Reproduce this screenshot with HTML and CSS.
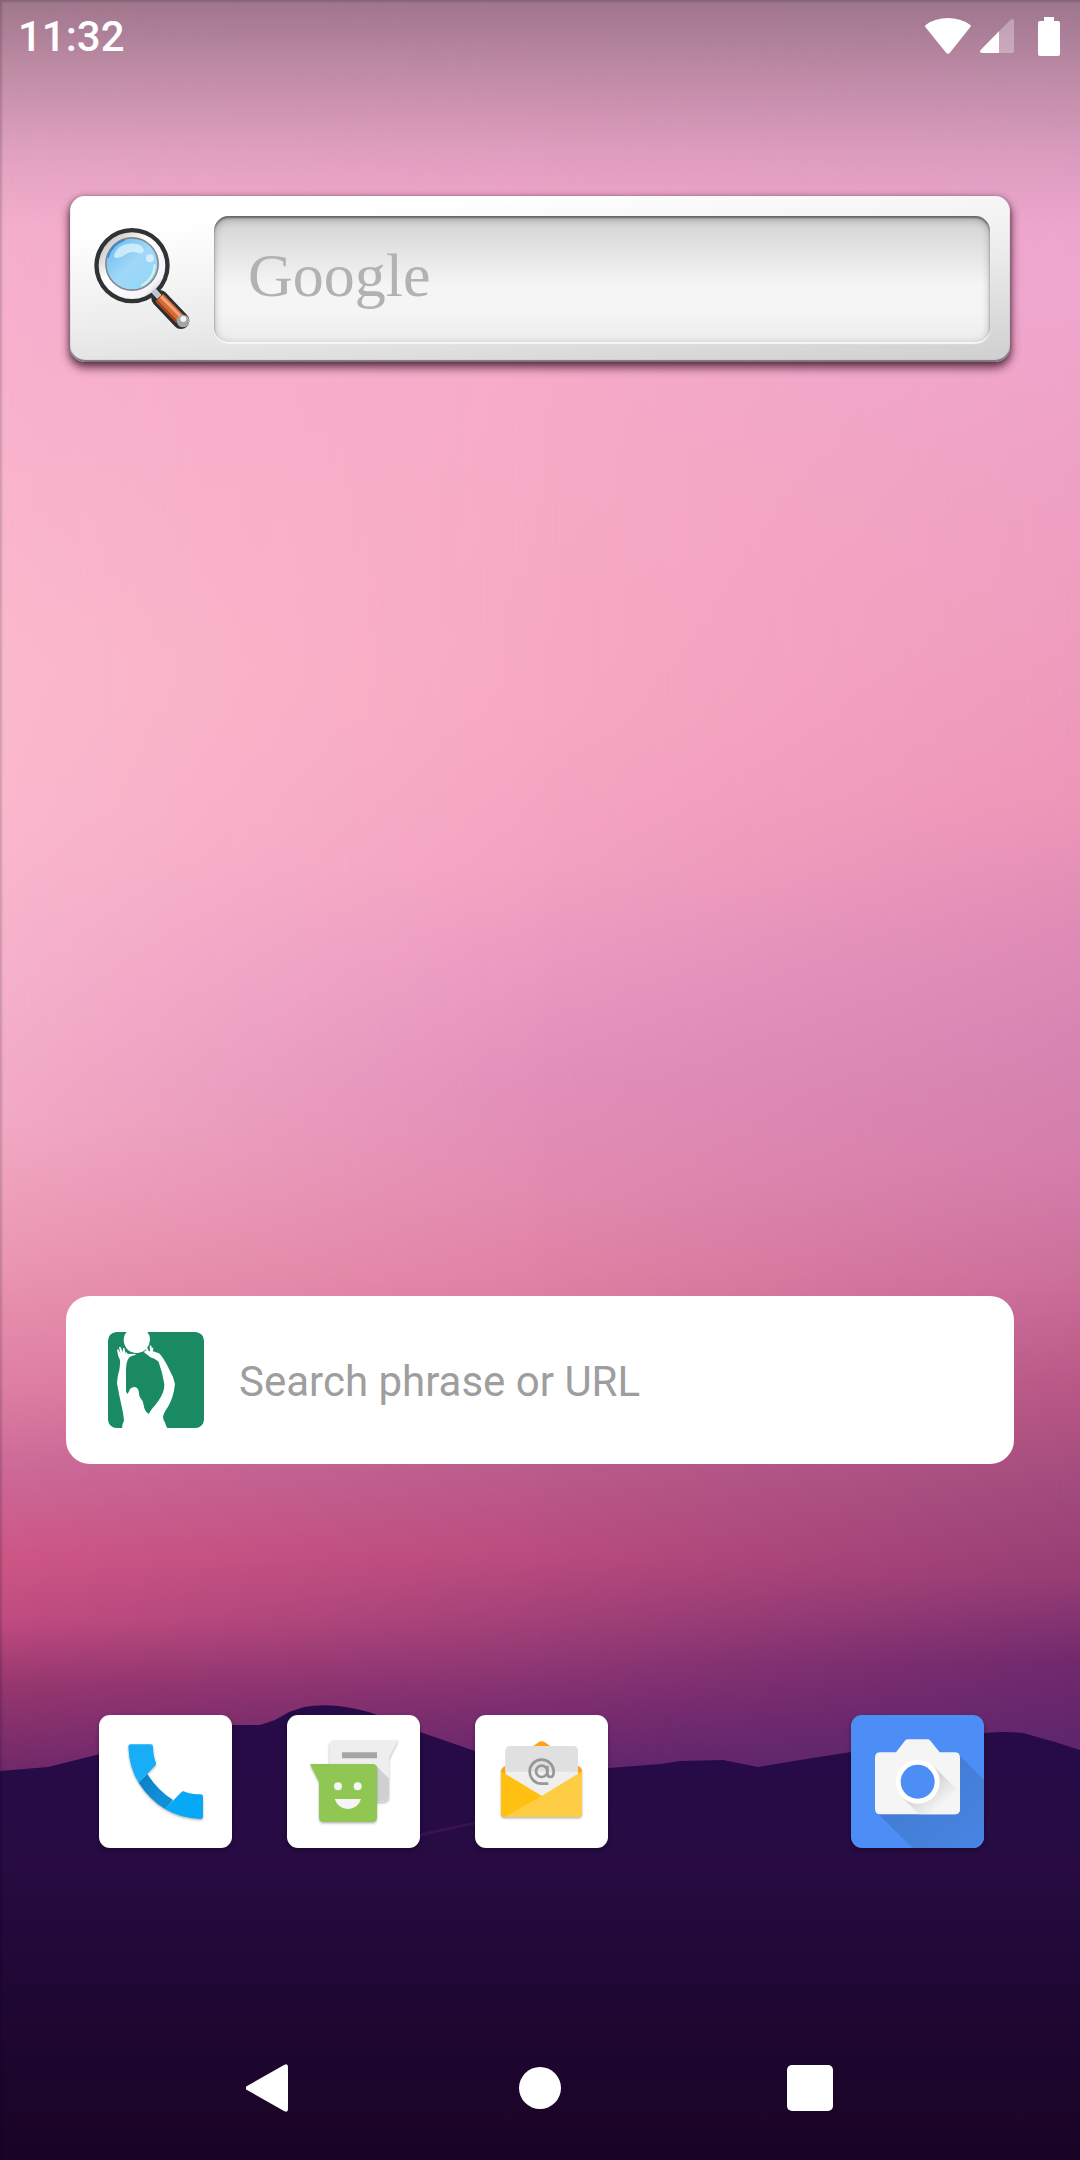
FILE: index.html
```html
<!DOCTYPE html>
<html lang="en">
<head>
  <meta charset="utf-8">
  <meta name="viewport" content="width=device-width, initial-scale=1">
  <title>Home screen</title>
  <link rel="stylesheet" href="styles.css">
</head>
<body>
  <div class="screen">
    <div class="wallpaper" aria-hidden="true">
      <div class="sky sky-center"></div>
      <div class="sky sky-right"></div>
      <svg class="mountains" viewBox="0 0 1080 520" preserveAspectRatio="none">
        <defs>
          <linearGradient id="ground" x1="0" y1="0" x2="0" y2="1">
            <stop offset="0" stop-color="#260b49"/>
            <stop offset=".35" stop-color="#270b42"/>
            <stop offset=".65" stop-color="#1f0733"/>
            <stop offset="1" stop-color="#1a0425"/>
          </linearGradient>
        </defs>
        <path fill="url(#ground)" d="M0 131L48 127L96 115L150 98L200 88L232 85H260L275 80L289 72L304 67Q320 64 338 66Q356 68 372 73L420 92L475 111L540 124L608 128L661 124L680 121L723 120L758 127L800 120L851 112L940 98L985 93Q1005 91 1023 93L1055 102L1080 110V520H0Z"/>
        <path fill="none" stroke="#43185a" stroke-width="3" opacity=".6" d="M412 197Q440 190 476 183"/>
      </svg>
      <div class="scrim"></div>
    </div>

    <header class="status">
      <time class="clock">11:32</time>
      <div class="indicators">
        <svg width="46" height="36" viewBox="137 51 138 108"><path fill="#fff" d="M138 78Q136 74 140 71Q168 51 206 51Q243 51 272 71Q276 74 273 78L211 156Q206 161 201 156Z"/></svg>
        <svg class="signal" width="34" height="34" viewBox="300 60 102 102"><path fill="#fff" opacity=".3" d="M357 97L392 62Q402 57 402 67V156Q402 162 396 162H357Z"/><path fill="#fff" d="M357 97V162H306Q297 160 302 153Z"/></svg>
        <svg width="22" height="39" viewBox="474 48 66 117"><path fill="#fff" d="M492 48H522V60H534Q540 60 540 66V159Q540 165 534 165H480Q474 165 474 159V66Q474 60 480 60H492Z"/></svg>
      </div>
    </header>

    <main class="home">
      <form class="google">
        <label class="google-icon" for="google-search" aria-label="Google search">
          <svg width="100" height="106" viewBox="128 138 300 318">
            <defs>
              <linearGradient id="lens" x1="0" y1="0" x2="1" y2="1"><stop offset="0" stop-color="#64b8ee"/><stop offset=".5" stop-color="#a0d8f8"/><stop offset="1" stop-color="#8fd6f8"/></linearGradient>
              <linearGradient id="rim" x1="0" y1="0" x2="1" y2="1"><stop offset="0" stop-color="#b4b0ae"/><stop offset=".4" stop-color="#fff"/><stop offset=".8" stop-color="#f4f4fa"/><stop offset="1" stop-color="#a6a8bd"/></linearGradient>
            </defs>
            <path stroke="#2c2e30" stroke-width="50" stroke-linecap="round" d="M325 352L389 419"/>
            <path stroke="#2c2e30" stroke-width="30" d="M295 320L330 358"/>
            <circle cx="242" cy="254" r="113" fill="#303234"/>
            <circle cx="242" cy="254" r="100" fill="url(#rim)"/>
            <circle cx="242" cy="249" r="81" fill="#82878e"/>
            <circle cx="242" cy="249" r="76" fill="url(#lens)"/>
            <path fill="#e0f4ff" opacity=".75" d="M188 222Q198 190 235 188Q273 186 278 208Q276 220 260 216Q238 208 220 222Q205 234 190 230Z"/>
            <circle cx="296" cy="232" r="12" fill="#e8f7ff" opacity=".75"/>
            <path fill="none" stroke="#3488d8" stroke-width="5" d="M170 230A75 75 0 0 1 220 177"/>
            <path fill="none" stroke="#d5efe9" stroke-width="7" d="M310 250A70 70 0 0 1 270 314"/>
            <path stroke="#c2c5ce" stroke-width="18" d="M306 328L324 348"/>
            <path stroke="#d66a38" stroke-width="32" d="M324 350L386 414"/>
            <path stroke="#f5a478" stroke-width="9" d="M329 346L390 408"/>
            <path stroke="#a74118" stroke-width="6" d="M315 358L377 423"/>
            <circle cx="395" cy="420" r="19" fill="#a5a5a5"/>
            <circle cx="396" cy="414" r="9" fill="#f2f2f2"/>
          </svg>
        </label>
        <input class="google-input" id="google-search" type="text" placeholder="Google">
      </form>

      <form class="search">
        <label class="search-icon" for="phrase" aria-label="Search">
          <svg width="96" height="96" viewBox="24 36 288 288">
            <rect x="24" y="36" width="288" height="288" rx="26" fill="#1a8a63"/>
            <path fill="#fff" d="M80 36H142Q150 45 150 60Q147 85 128 95Q110 103 92 95Q73 85 71 62Q71 45 80 36Z"/>
            <path fill="#fff" d="M66 324Q66 312 72 302Q70 280 66 264Q57 225 51 190Q53 165 58 150Q61 128 60 120Q53 108 51 89L55 88L61 99L57 82L61 80L69 96V84L73 84L77 100L80 96L83 102L103 101L109 104Q96 106 88 112Q78 125 78 150V214L82 222Q87 216 90 207Q99 199 107 202Q116 205 117 220Q117 229 121 233Q130 242 131 255Q133 274 146 282L155 268Q178 242 187 222Q194 208 193 192Q188 160 176 126Q170 118 151 112Q142 104 131 96L139 91L138 85L142 84L146 93L150 94L149 77L153 76L156 85L160 82L159 94L177 100L184 107Q200 130 207 147Q221 170 225 193Q220 235 204 260Q190 280 189 291Q190 302 196 310Q198 319 202 324Z"/>
            <path fill="none" stroke="#1a8a63" stroke-width="2" d="M88 96Q110 106 128 96"/>
          </svg>
        </label>
        <input class="search-input" id="phrase" type="text" placeholder="Search phrase or URL">
      </form>

      <nav class="dock" aria-label="Apps">
        <button class="app" type="button" aria-label="Phone">
          <svg viewBox="57 45 399 399">
            <defs>
              <linearGradient id="fold" x1="0" y1="0" x2="1" y2="1"><stop offset="0" stop-color="#0b7cc4"/><stop offset=".6" stop-color="#0e8fd8"/></linearGradient>
            </defs>
            <g class="lift">
              <path fill="url(#fold)" d="M176 248L202 222Q232 270 279 300L255 327Q208 298 176 248Z"/>
              <path fill="#18aef7" d="M145 140Q145 133 152 133H212Q219 133 219 140Q220 170 228 188Q229 192 225 197L176 248Q147 202 145 140Z"/>
              <path fill="#07a9f6" d="M255 327L304 277Q309 272 314 275Q335 283 363 283Q369 284 369 290V350Q369 357 362 357Q302 355 255 327Z"/>
            </g>
          </svg>
        </button>
        <button class="app" type="button" aria-label="Messages">
          <svg viewBox="51 45 399 399">
            <g class="lift">
              <path fill="#eee" d="M194 121H384L357 175V289Q357 305 341 305H178V137Q178 121 194 121Z"/>
            </g>
            <path fill="#d0d0d0" d="M316 194L357 236V289Q357 304 341 304H316Z"/>
            <path fill="#a5a5a5" d="M216 157H321V175H216Z"/>
            <path class="lift" fill="#8fc752" d="M120 192H307Q321 192 321 206V352Q321 366 307 366H161Q147 366 147 352V245Z"/>
            <circle cx="204" cy="259" r="12" fill="#f5f5f5"/>
            <circle cx="263" cy="259" r="12" fill="#f5f5f5"/>
            <path fill="#f5f5f5" d="M194 297H273Q264 326 234 327Q204 326 194 297Z"/>
          </svg>
        </button>
        <button class="app" type="button" aria-label="Email">
          <svg viewBox="45 45 399 399">
            <path class="lift" fill="#ffa113" d="M123 212Q124 207 130 202L237 126Q245 121 253 126L360 202Q366 207 366 213V340Q366 351 355 351H134Q123 351 123 340Z"/>
            <path fill="#efefef" d="M136 154Q136 138 152 138H338Q354 138 354 154V225L246 292L136 225Z"/>
            <path fill="#e0e0e0" d="M136 154Q136 138 152 138H338Q354 138 354 154V215H136Z"/>
            <g fill="none" stroke="#979797" stroke-width="8">
              <circle cx="245" cy="214" r="17"/>
              <path d="M265 251H245A36 36 0 1 1 281 214V219Q280 231 271 231Q262 231 262 219V197"/>
            </g>
            <path fill="#ffc012" d="M123 214L246 288L140 351H134Q123 351 123 340Z"/>
            <path fill="#ffcd43" d="M366 214V340Q366 351 355 351H140L137 349L246 287Z"/>
          </svg>
        </button>
        <button class="app app-camera" type="button" aria-label="Camera">
          <svg viewBox="63 45 399 399">
            <defs>
              <linearGradient id="cast" x1="0" y1="0" x2="1" y2="1"><stop offset="0" stop-color="#4079cc"/><stop offset="1" stop-color="#4884e3"/></linearGradient>
              <linearGradient id="lensCast" x1="0" y1="0" x2="1" y2="1"><stop offset=".4" stop-color="#d2d2d2"/><stop offset=".75" stop-color="#f5f5f5"/></linearGradient>
            </defs>
            <path fill="url(#cast)" d="M385 162L462 239V444H247L142 339Z"/>
            <path fill="#f5f5f5" d="M151 157H198L226 121Q229 118 233 118H293Q297 118 300 121L329 157H374Q390 157 390 173V327Q390 343 374 343H151Q135 343 135 327V173Q135 157 151 157Z"/>
            <path fill="url(#lensCast)" d="M310 198L390 278V327Q390 343 374 343H267L216 292Z"/>
            <circle cx="263" cy="245" r="66" fill="#fff"/>
            <circle cx="263" cy="245" r="51" fill="#4d8ef6"/>
          </svg>
        </button>
      </nav>
    </main>

    <nav class="system" aria-label="System">
      <button class="key" type="button" aria-label="Back">
        <svg width="48" height="48" viewBox="0 0 48 48"><path fill="#fff" d="M1 22L38 1Q42 -1 42 3V45Q42 49 38 47L1 26Q-2 24 1 22Z"/></svg>
      </button>
      <button class="key" type="button" aria-label="Home">
        <svg width="48" height="48" viewBox="0 0 48 48"><circle cx="24" cy="24" r="21" fill="#fff"/></svg>
      </button>
      <button class="key" type="button" aria-label="Recent apps">
        <svg width="48" height="48" viewBox="0 0 48 48"><rect x="1" y="1" width="46" height="46" rx="5" fill="#fff"/></svg>
      </button>
    </nav>
  </div>
</body>
</html>
```
FILE: styles.css
```css
* {
  box-sizing: border-box;
}

body {
  margin: 0;
  font-family: Roboto, "Liberation Sans", sans-serif;
}

svg {
  display: block;
}

button {
  padding: 0;
  border: 0;
  background: none;
}

.screen {
  position: relative;
  z-index: 0;
  display: flex;
  flex-direction: column;
  min-height: 100vh;
}

/* Wallpaper: three vertical skies cross-faded from left to right */
.wallpaper {
  position: absolute;
  inset: 0;
  z-index: -1;
  overflow: hidden;
  background: linear-gradient(#e4aac8 0%, #f2aecd 8%, #f7b0cd 15%, #f9b4cc 22%, #fbbacd 31%, #fab8cd 38%, #f5b0ca 46%, #f2a9c3 52%, #eb98b3 58%, #df80a3 64%, #cd6a98 68%, #cd5786 72%, #c04c80 75%, #97376f 78%, #71296a 82%);
}

.sky {
  position: absolute;
  inset: 0;
}

.sky-center {
  background: linear-gradient(#e4a8c8 0%, #f1a8cc 8%, #f6abc9 16%, #f7aac4 24%, #f7a8c2 33%, #f3a2c0 40%, #ea98c0 45%, #e28fba 50%, #e28bb0 55%, #e082a4 59%, #d4789f 62%, #b95c8b 68%, #ba4b7e 72%, #a24178 75%, #7d2e70 79%, #61266c 82%);
  mask-image: linear-gradient(to right, transparent, #000 50%);
}

.sky-right {
  background: linear-gradient(#e0a8c8 0%, #eaa6cb 8%, #efa6cd 14%, #eea1c4 21%, #ef9dbe 29%, #ed96b8 37%, #df8bb5 43%, #d685b2 48%, #d47da9 54%, #cb6f9b 59%, #b95886 64%, #a14a7c 69%, #953d74 73%, #70296d 77%, #5d266c 81%);
  mask-image: linear-gradient(to right, transparent 50%, #000);
}

.mountains {
  position: absolute;
  bottom: 0;
  width: 100%;
  height: 520px;
}

.scrim {
  position: absolute;
  inset: 0;
  background: linear-gradient(rgba(0, 0, 0, .3), rgba(0, 0, 0, .18) 72px, rgba(0, 0, 0, .07) 150px, transparent 230px);
  box-shadow: inset 2px 2px 2px rgba(0, 0, 0, .16);
}

.status {
  display: flex;
  align-items: center;
  justify-content: space-between;
  height: 72px;
  padding: 0 20px 0 18px;
}

.clock {
  color: #fff;
  font-size: 42px;
  font-weight: 500;
  line-height: 72px;
  padding-top: 2px;
}

.indicators {
  display: flex;
  align-items: center;
  gap: 9px;
}

.signal {
  margin-right: 15px;
}

.home {
  display: flex;
  flex: 1;
  flex-direction: column;
}

.google {
  display: flex;
  align-items: center;
  height: 166px;
  margin: 124px 70px 0;
  padding: 0 20px 0 24px;
  border-radius: 15px;
  background: linear-gradient(175deg, #fff 15%, #ececec 55%, #cfcfcf);
  box-shadow: inset 0 -2px 1px #777, 0 5px 10px 1px rgba(40, 0, 25, .65), 0 1px 5px rgba(40, 0, 25, .35);
}

.google-icon {
  width: 120px;
  padding-top: 2px;
}

.google-input {
  flex: 1;
  min-width: 0;
  height: 126px;
  padding: 0 34px 8px;
  border: 0;
  border-radius: 15px;
  background: linear-gradient(#d2d2d2, #f5f5f5 55%, #f5f5f5 75%, #ececec);
  box-shadow: inset 0 2px 2px #666, inset 0 3px 8px rgba(0, 0, 0, .28), 0 2px 1px #f8f8f8;
  font-family: "Liberation Serif", serif;
  font-size: 62px;
}

.google-input::placeholder {
  color: #b2b2b2;
  opacity: 1;
}

.search {
  display: flex;
  align-items: center;
  gap: 35px;
  height: 168px;
  margin: auto 66px 251px;
  padding: 0 42px;
  border-radius: 24px;
  background: #fff;
}

.search-input {
  flex: 1;
  min-width: 0;
  height: 96px;
  padding: 2px 0 0;
  border: 0;
  background: none;
  font-family: inherit;
  font-size: 42px;
}

.search-input::placeholder {
  color: #9e9e9e;
  opacity: 1;
}

.dock {
  display: grid;
  grid-template-columns: repeat(5, 1fr);
  justify-items: center;
  margin-bottom: 168px;
  padding: 0 69px 0 71px;
}

.app {
  width: 133px;
  height: 133px;
  overflow: hidden;
  border-radius: 11px;
  background: #fff;
  box-shadow: 0 2px 4px rgba(0, 0, 0, .35);
}

.app-camera {
  grid-column: 5;
  background: #4d8ef6;
}

.lift {
  filter: drop-shadow(0 4px 3px rgba(0, 0, 0, .3));
}

.system {
  display: grid;
  grid-template-columns: repeat(3, 1fr);
  height: 144px;
  padding: 0 12.5%;
}

.key {
  display: grid;
  place-items: center;
}
```
